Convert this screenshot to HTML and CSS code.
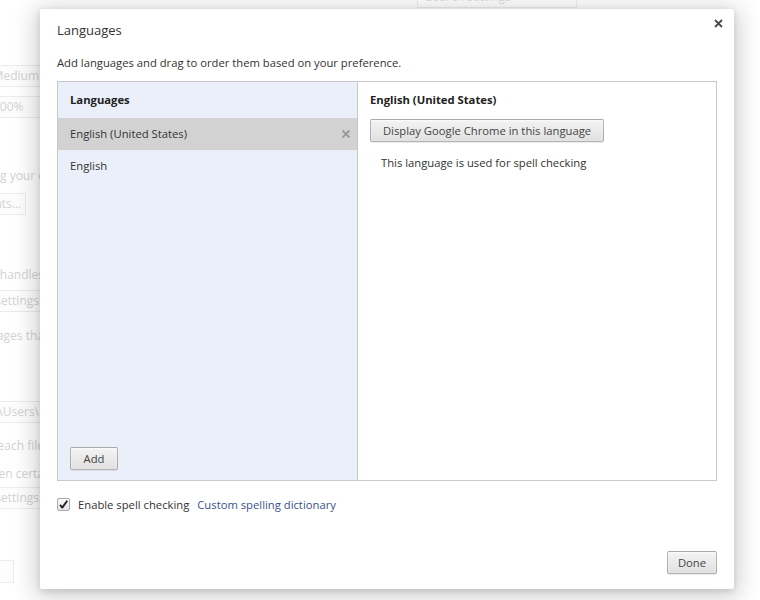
FILE: index.html
```html
<!DOCTYPE html>
<html>
<head>
<meta charset="utf-8">
<link rel="stylesheet" href="styles.css">
</head>
<body>
<div class="page">
  <div class="search-row"><div class="search">Search settings</div></div>
  <div class="bg-col">
    <div class="bg-select s1">Medium</div>
    <div class="bg-select s2">100%</div>
    <div class="bg-text t1">Customizing your c</div>
    <div class="bg-btn b1">Fonts...</div>
    <div class="bg-text t2">Chrome handles</div>
    <div class="bg-btn b2">Manage settings</div>
    <div class="bg-text t3">Offer to translate pages tha</div>
    <div class="bg-input i1">C:\Users\</div>
    <div class="bg-text t4">Ask where to save each file</div>
    <div class="bg-text t5">Open certa</div>
    <div class="bg-btn b3">Reset settings</div>
    <div class="bg-btn b4">Show</div>
  </div>
</div>

<div class="dialog">
  <button class="close" aria-label="Close">
    <svg width="9" height="9" viewBox="0 0 9 9"><path d="M1 1 L8 8 M8 1 L1 8" stroke="#4a4a4a" stroke-width="1.8" fill="none"/></svg>
  </button>
  <div class="title">Languages</div>
  <div class="desc">Add languages and drag to order them based on your preference.</div>
  <div class="box">
    <div class="left">
      <div class="left-head">Languages</div>
      <div class="row selected">
        <span>English (United States)</span>
        <svg class="rm" width="10" height="10" viewBox="0 0 10 10"><path d="M1.5 1.5 L8.5 8.5 M8.5 1.5 L1.5 8.5" stroke="#9a9a9a" stroke-width="1.8" fill="none"/></svg>
      </div>
      <div class="row">English</div>
      <div class="spacer"></div>
      <div class="left-foot"><button class="btn add">Add</button></div>
    </div>
    <div class="right">
      <div class="right-head">English (United States)</div>
      <button class="btn display">Display Google Chrome in this language</button>
      <div class="note">This language is used for spell checking</div>
    </div>
  </div>
  <div class="check-row">
    <span class="checkbox">
      <svg width="11" height="11" viewBox="0 0 11 11"><path d="M2 5.8 L4.3 8.6 L9.2 1.8" stroke="#222" stroke-width="1.9" fill="none" stroke-linejoin="round"/></svg>
    </span>
    <span class="check-label">Enable spell checking</span>
    <a class="link" href="#">Custom spelling dictionary</a>
  </div>
  <div class="grow"></div>
  <div class="actions"><button class="btn done">Done</button></div>
</div>
</body>
</html>
```

FILE: styles.css
```css
html, body {
  margin: 0;
  padding: 0;
  background: #fff;
  width: 760px;
  height: 600px;
  overflow: hidden;
  font-family: "Open Sans", "Noto Sans", sans-serif;
  font-size: 11.25px;
  color: #333;
}

/* faded settings page behind the overlay */
.page {
  color: #d2d2d2;
  font-size: 12px;
}
.search-row {
  display: flex;
  padding-left: 417px;
  margin-top: -14px;
}
.search {
  width: 150px;
  height: 20px;
  border: 1px solid #efefef;
  padding-left: 8px;
  line-height: 20px;
  color: #e0e0e0;
}
.bg-col {
  display: flex;
  flex-direction: column;
  align-items: flex-end;
  width: 44px;
}
.bg-select, .bg-btn, .bg-input {
  border: 1px solid #ececec;
  height: 20px;
  line-height: 20px;
  padding: 0 4px;
  white-space: nowrap;
  background: #fdfdfd;
}
.bg-text { white-space: nowrap; line-height: 16px; }
.s1 { margin-top: 57px; width: 60px; text-align: right; }
.s2 { margin-top: 9px; align-self: flex-start; margin-left: -12px; width: 60px; }
.t1 { margin-top: 50px; }
.b1 { margin-top: 9px; align-self: flex-start; margin-left: -24px; width: 40px; text-align: right; }
.t2 { margin-top: 52px; }
.b2 { margin-top: 7px; }
.t3 { margin-top: 16px; }
.i1 { margin-top: 57px; }
.t4 { margin-top: 15px; }
.t5 { margin-top: 12px; }
.b3 { margin-top: 5px; }
.b4 { margin-top: 51px; align-self: flex-start; margin-left: -40px; width: 44px; height: 21px; color: transparent; }

/* dialog overlay */
.dialog {
  position: absolute;
  left: 40px;
  top: 9px;
  width: 694px;
  height: 580px;
  box-sizing: border-box;
  padding: 0 17px 15px 17px;
  background: #fff;
  border-radius: 2px;
  box-shadow: 0 4px 23px 5px rgba(0,0,0,0.18), 0 2px 6px rgba(0,0,0,0.12);
  display: flex;
  flex-direction: column;
}
.close {
  position: absolute;
  right: 10px;
  top: 9px;
  width: 11px;
  height: 11px;
  padding: 1px;
  border: 0;
  background: none;
  display: flex;
}
.title {
  margin-top: 12px;
  line-height: 18px;
  font-size: 13px;
  color: #333;
}
.desc {
  margin-top: 16px;
  line-height: 16px;
  color: #333;
}
.box {
  margin-top: 10px;
  height: 400px;
  box-sizing: border-box;
  border: 1px solid #c8c8c8;
  display: flex;
}
.left {
  width: 300px;
  box-sizing: border-box;
  border-right: 1px solid #c8c8c8;
  background: #ebeff9;
  display: flex;
  flex-direction: column;
}
.left-head {
  height: 36px;
  line-height: 36px;
  padding-left: 12px;
  font-weight: bold;
  color: #222;
}
.row {
  height: 32px;
  line-height: 32px;
  padding: 0 6px 0 12px;
  display: flex;
  align-items: center;
  justify-content: space-between;
  color: #333;
}
.row.selected { background: #d2d2d2; }
.rm { margin-right: 0; }
.spacer { flex: 1; }
.left-foot { padding: 0 0 10px 12px; }
.btn {
  font-family: inherit;
  font-size: 11.25px;
  color: #444;
  height: 23px;
  box-sizing: border-box;
  border: 1px solid rgba(0,0,0,0.25);
  border-radius: 2px;
  background: linear-gradient(#f3f3f3, #e1e1e1);
  box-shadow: 0 1px 0 rgba(0,0,0,0.08), inset 0 1px 2px rgba(255,255,255,0.75);
  padding: 0 10px;
}
.add { width: 48px; }
.right {
  flex: 1;
  padding-left: 12px;
  display: flex;
  flex-direction: column;
  align-items: flex-start;
}
.right-head {
  height: 37px;
  line-height: 36px;
  font-weight: bold;
  color: #222;
}
.display { height: 23px; width: 234px; padding: 0; }
.note {
  margin-top: 13px;
  padding-left: 11px;
  line-height: 16px;
  color: #333;
}
.check-row {
  margin-top: 15px;
  display: flex;
  align-items: center;
  height: 16px;
}
.checkbox {
  width: 13px;
  height: 13px;
  box-sizing: border-box;
  border: 1px solid #a9a9a9;
  border-radius: 2px;
  background: linear-gradient(#fafafa, #e6e6e6);
  display: flex;
  align-items: center;
  justify-content: center;
}
.check-label { margin-left: 8px; color: #333; }
.link {
  margin-left: 8px;
  color: #3b4f8f;
  text-decoration: none;
}
.grow { flex: 1; }
.actions { display: flex; justify-content: flex-end; }
.done { width: 50px; padding: 0; }
```
